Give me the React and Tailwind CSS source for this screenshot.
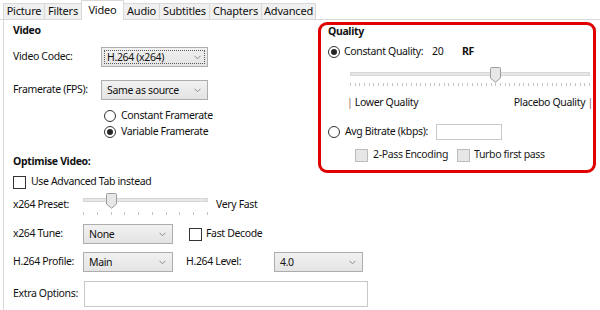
import React from "react";

const Chevron = () => (
  <svg width="7" height="5" viewBox="0 0 7 5" className="shrink-0">
    <path d="M0.5 0.8 L3.5 3.8 L6.5 0.8" fill="none" stroke="#8a8a8a" strokeWidth="1" />
  </svg>
);

function Dropdown({ w, h = "h-[20px]", value, focus }) {
  return (
    <div
      className={`relative flex ${h} ${w} shrink-0 items-center justify-between border border-[#adadad] bg-gradient-to-b from-[#f1f1f1] to-[#e4e4e4] pl-[5px] pr-[6px]`}
    >
      {focus && (
        <div className="pointer-events-none absolute inset-[2px] border border-dotted border-[#5a5a5a]" />
      )}
      <span className="leading-none">{value}</span>
      <Chevron />
    </div>
  );
}

function Radio({ checked }) {
  return (
    <div className="flex h-[12px] w-[12px] shrink-0 items-center justify-center rounded-full border border-[#333] bg-white">
      {checked && <div className="h-[6px] w-[6px] rounded-full bg-[#262626]" />}
    </div>
  );
}

function Check({ disabled }) {
  return (
    <div
      className={`h-[13px] w-[13px] shrink-0 border ${
        disabled ? "border-[#bcbcbc] bg-[#e6e6e6]" : "border-[#333] bg-white"
      }`}
    />
  );
}

function Thumb() {
  return (
    <svg width="11" height="16" viewBox="0 0 11 16">
      <path
        d="M0.5 1.5 Q0.5 0.5 1.5 0.5 H9.5 Q10.5 0.5 10.5 1.5 V11 L5.5 15.3 L0.5 11 Z"
        fill="#e7e7e7"
        stroke="#9c9c9c"
        strokeWidth="1"
      />
    </svg>
  );
}

function Slider({ width, count, index, thumbTop, trackTop, tickTop, height }) {
  const ticks = [];
  for (let i = 0; i < count; i++) {
    ticks.push(Math.round((i * (width - 1)) / (count - 1)));
  }
  const thumbX = Math.round((index * (width - 1)) / (count - 1)) - 5;
  return (
    <div className="relative shrink-0" style={{ width, height }}>
      <div
        className="absolute left-0 h-[4px] w-full border border-[#d6d6d6] bg-[#e7e7e7]"
        style={{ top: trackTop }}
      />
      {ticks.map((x, i) => (
        <div
          key={i}
          className="absolute h-[3px] w-[1px] bg-[#c4c4c4]"
          style={{ left: x, top: tickTop }}
        />
      ))}
      <div className="absolute" style={{ left: thumbX, top: thumbTop }}>
        <Thumb />
      </div>
    </div>
  );
}

const tabs = [
  { name: "Picture", w: "w-[42px]" },
  { name: "Filters", w: "w-[38px]" },
  { name: "Video", w: "w-[43px]", active: true },
  { name: "Audio", w: "w-[37px]" },
  { name: "Subtitles", w: "w-[51px]" },
  { name: "Chapters", w: "w-[53px]" },
  { name: "Advanced", w: "w-[55px]" },
];

export default function App() {
  return (
    <div className="relative h-[310px] w-[600px] overflow-hidden whitespace-nowrap bg-white font-['Noto_Sans',sans-serif] text-[10.5px] tracking-[-0.35px] text-[#111]">
      {/* Tab strip */}
      <div className="flex h-[20px] items-end border-b border-[#d9d9d9] pl-[3px]">
        {tabs.map((t) =>
          t.active ? (
            <div
              key={t.name}
              className={`relative z-10 -mb-px -ml-px flex h-[20px] ${t.w} items-center justify-center border border-b-0 border-[#d9d9d9] bg-white pb-[1px] text-[11px] tracking-[-0.2px]`}
            >
              {t.name}
            </div>
          ) : (
            <div
              key={t.name}
              className={`-ml-px flex h-[16px] ${t.w} items-center justify-center border border-b-0 border-[#d9d9d9] bg-[#f0f0f0] text-[11px] tracking-[-0.2px] first:ml-0`}
            >
              {t.name}
            </div>
          )
        )}
      </div>

      {/* Body */}
      <div className="ml-[3px] flex h-[290px] border-l border-[#d9d9d9]">
        {/* Left column */}
        <div className="flex w-[314px] shrink-0 flex-col pl-[9px]">
          <div className="mt-[4px] flex h-[14px] items-center font-bold">Video</div>

          <div className="mt-[9px] flex h-[20px] items-center">
            <span className="w-[88px] shrink-0">Video Codec:</span>
            <Dropdown w="w-[107px]" value="H.264 (x264)" focus />
          </div>

          <div className="mt-[13px] flex h-[20px] items-center">
            <span className="w-[88px] shrink-0">Framerate (FPS):</span>
            <Dropdown w="w-[107px]" value="Same as source" />
          </div>

          <div className="mt-[8px] flex h-[16px] items-center pl-[91px]">
            <Radio />
            <span className="ml-[5px]">Constant Framerate</span>
          </div>
          <div className="flex h-[16px] items-center pl-[91px]">
            <Radio checked />
            <span className="ml-[5px]">Variable Framerate</span>
          </div>

          <div className="mt-[15px] flex h-[14px] items-center font-bold">Optimise Video:</div>

          <div className="mt-[5px] flex h-[16px] items-center">
            <Check />
            <span className="ml-[5px]">Use Advanced Tab instead</span>
          </div>

          <div className="mt-[3px] flex h-[23px] items-center">
            <span className="w-[70px] shrink-0">x264 Preset:</span>
            <Slider width={125} count={10} index={2} height={23} thumbTop={0} trackTop={5} tickTop={19} />
            <span className="ml-[8px]">Very Fast</span>
          </div>

          <div className="mt-[8px] flex h-[20px] items-center">
            <span className="w-[70px] shrink-0">x264 Tune:</span>
            <Dropdown w="w-[90px]" value="None" />
            <div className="ml-[16px] flex items-center">
              <Check />
              <span className="ml-[4px]">Fast Decode</span>
            </div>
          </div>

          <div className="mt-[8px] flex h-[20px] items-center">
            <span className="w-[70px] shrink-0">H.264 Profile:</span>
            <Dropdown w="w-[90px]" value="Main" />
            <span className="ml-[13px] w-[88px] shrink-0">H.264 Level:</span>
            <Dropdown w="w-[89px]" value="4.0" />
          </div>

          <div className="mt-[9px] flex h-[26px] items-center">
            <span className="w-[71px] shrink-0">Extra Options:</span>
            <div className="h-[26px] w-[284px] shrink-0 border border-[#c8c8c8] bg-white" />
          </div>
        </div>

        {/* Right column: Quality */}
        <div className="mt-[2px] flex h-[151px] w-[278px] shrink-0 flex-col rounded-[9px] border-[3px] border-[#e00000] pl-[7px]">
          <div className="flex h-[14px] items-center font-bold">Quality</div>

          <div className="mt-[6px] flex h-[14px] items-center">
            <Radio checked />
            <span className="ml-[4px] w-[88px] shrink-0">Constant Quality:</span>
            <span className="w-[30px] shrink-0">20</span>
            <span className="font-bold">RF</span>
          </div>

          <div className="mt-[6px] flex h-[24px] pl-[22px]">
            <Slider width={240} count={52} index={31} height={24} thumbTop={2} trackTop={7} tickTop={18} />
          </div>

          <div className="mt-[7px] flex h-[14px] items-center justify-between pl-[19px]">
            <span>
              <span className="text-[#9a6060]">|</span> Lower Quality
            </span>
            <span>
              Placebo Quality <span className="text-[#9a6060]">|</span>
            </span>
          </div>

          <div className="mt-[14px] flex h-[16px] items-center">
            <Radio />
            <span className="ml-[5px] w-[91px] shrink-0">Avg Bitrate (kbps):</span>
            <div className="h-[16px] w-[66px] shrink-0 border border-[#c8c8c8] bg-white" />
          </div>

          <div className="mt-[8px] flex h-[14px] items-center pl-[27px] text-[#1a1a1a]">
            <Check disabled />
            <span className="ml-[5px] w-[84px] shrink-0">2-Pass Encoding</span>
            <Check disabled />
            <span className="ml-[4px]">Turbo first pass</span>
          </div>
        </div>
      </div>
    </div>
  );
}
